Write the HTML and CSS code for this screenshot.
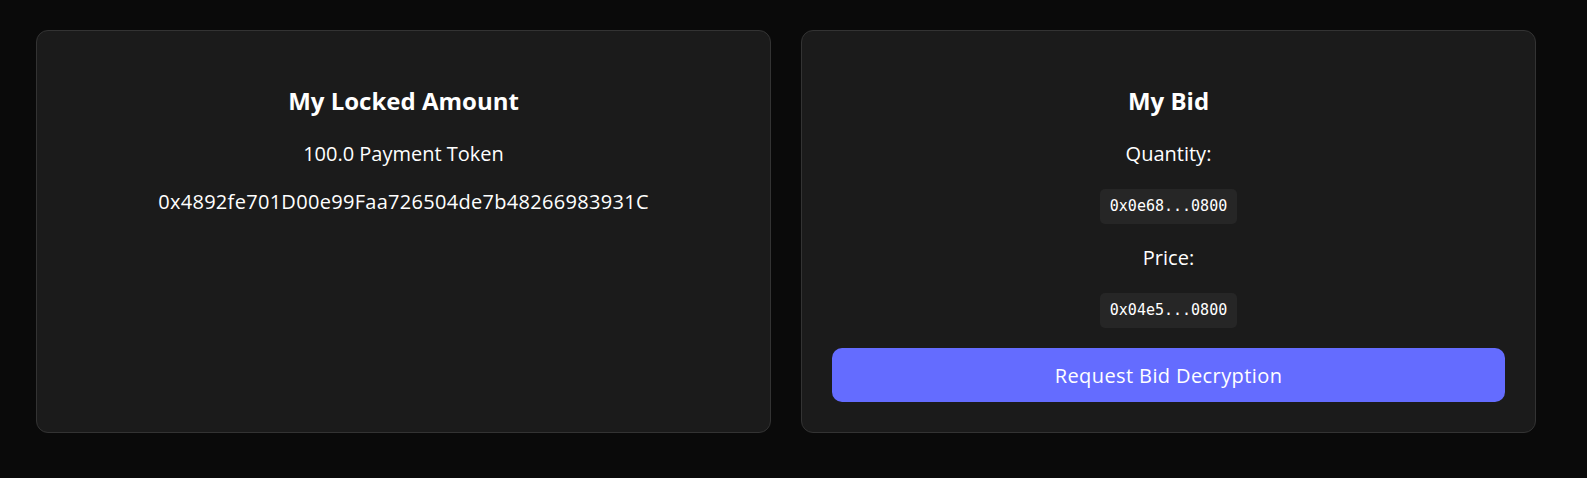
FILE: index.html
```html
<!DOCTYPE html>
<html lang="en">
<head>
<meta charset="utf-8">
<title>Auction</title>
<link rel="stylesheet" href="styles.css">
</head>
<body>
<main class="page">
  <section class="card">
    <h3 class="title">My Locked Amount</h3>
    <p class="line">100.0 Payment Token</p>
    <p class="line line-gap address">0x4892fe701D00e99Faa726504de7b48266983931C</p>
  </section>
  <section class="card">
    <h3 class="title">My Bid</h3>
    <p class="line">Quantity:</p>
    <div class="code-row"><code class="code">0x0e68...0800</code></div>
    <p class="line line-after-code">Price:</p>
    <div class="code-row"><code class="code">0x04e5...0800</code></div>
    <button class="btn" type="button">Request Bid Decryption</button>
  </section>
</main>
</body>
</html>
```
FILE: styles.css
```css
html, body {
  margin: 0;
  padding: 0;
  background: #0a0a0a;
  color: #ffffff;
  font-family: "Open Sans", "Noto Sans", "Liberation Sans", sans-serif;
}

.page {
  display: grid;
  grid-template-columns: 735px 735px;
  gap: 30px;
  padding: 30px 0 0 36px;
  align-items: stretch;
}

.card {
  background: #1b1b1b;
  border: 1px solid #333333;
  border-radius: 12px;
  padding: 30px;
  display: flex;
  flex-direction: column;
  align-items: center;
  text-align: center;
}

.title {
  font-size: 24px;
  font-weight: 700;
  line-height: 32px;
  margin: 24px 0;
}

.line {
  font-size: 20px;
  line-height: 26px;
  margin: 0;
}

.address {
  letter-spacing: 0.3px;
}

.line-gap {
  margin-top: 22px;
}

.line-after-code {
  margin-top: 21px;
}

.code-row {
  margin-top: 22px;
}

.code {
  display: inline-block;
  font-family: "DejaVu Sans Mono", "Liberation Mono", monospace;
  font-size: 15px;
  line-height: 19px;
  padding: 8px 10px;
  background: #262626;
  border-radius: 5px;
  color: #ffffff;
}

.btn {
  align-self: stretch;
  margin-top: 20px;
  height: 54px;
  border: none;
  border-radius: 10px;
  background: #646cff;
  color: #ffffff;
  font-family: inherit;
  font-size: 20px;
  letter-spacing: 0.4px;
  cursor: pointer;
}
```
